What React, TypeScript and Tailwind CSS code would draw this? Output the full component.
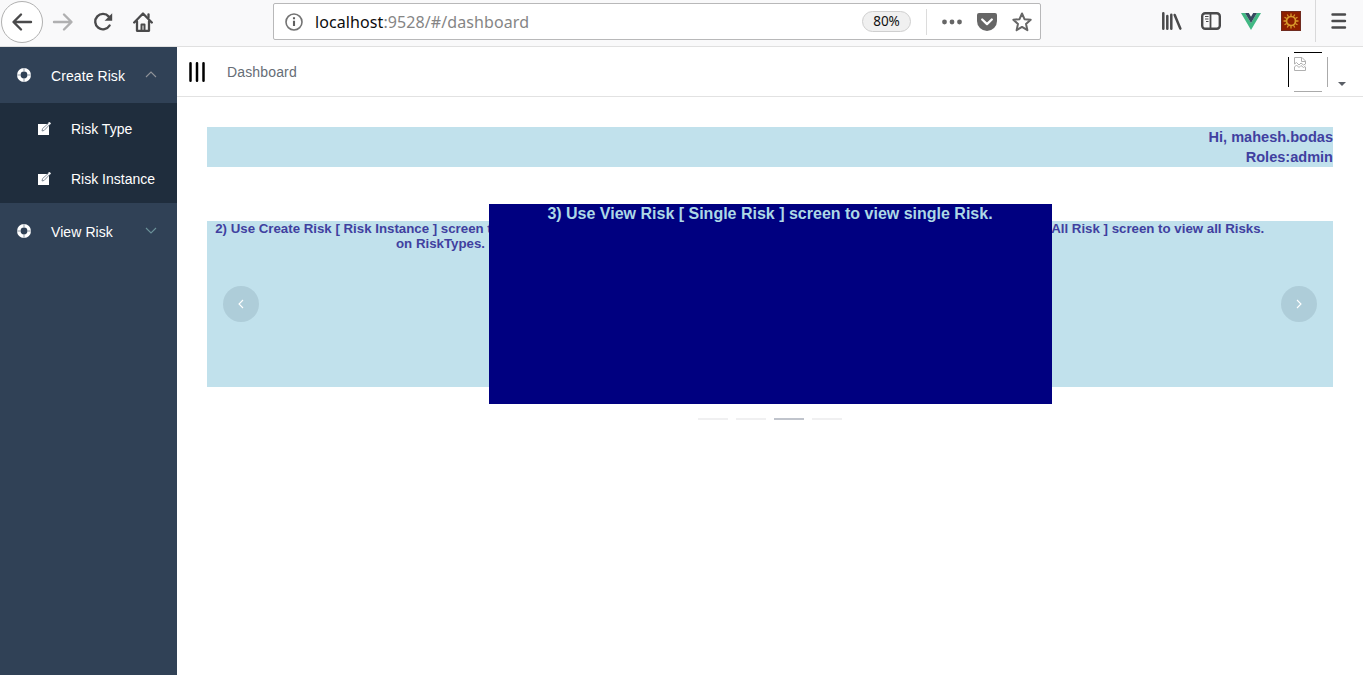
import React from "react";

function BrowserBar() {
  return (
    <header className="flex h-[47px] shrink-0 border-b border-[#e0e0e0] bg-[#f9f9fa] text-[#4a4a4b]">
      <div className="flex h-[43px] w-[273px] items-center">
        <div className="ml-px flex size-[42px] items-center justify-center rounded-full border border-[#b1b1b1] bg-white">
          <svg width="22" height="20" viewBox="0 0 22 20" fill="none" stroke="currentColor" strokeWidth="2.4" strokeLinecap="round" strokeLinejoin="round">
            <path d="M20 10H3M10 2.5 2.5 10l7.500 7.500" />
          </svg>
        </div>
        <svg className="ml-[9px] text-[#b0b0b1]" width="22" height="20" viewBox="0 0 22 20" fill="none" stroke="currentColor" strokeWidth="2.4" strokeLinecap="round" strokeLinejoin="round">
          <path d="M2 10h17M12 2.500 19.500 10 12 17.500" />
        </svg>
        <svg className="ml-[19px]" width="20" height="20" viewBox="0 0 20 20" fill="none">
          <path d="M15.800 4.600A7.700 7.700 0 1 0 16.600 13.500" stroke="currentColor" strokeWidth="2.400" strokeLinecap="round" />
          <path d="M19.200 1.200v7.600h-7.600z" fill="currentColor" />
        </svg>
        <svg className="ml-5" width="20" height="20" viewBox="0 0 20 20" fill="none" stroke="currentColor" strokeWidth="2.300" strokeLinecap="round" strokeLinejoin="round">
          <path d="M1.200 10.500 10 1.500l8.800 9M4 9.500v9.300h12V9.500" />
          <path d="M8.500 18v-5.500h3V18" strokeWidth="2" />
          <path d="M15.500 2.500v3" />
        </svg>
      </div>
      <div className="mt-[3px] flex h-[37px] w-[768px] items-center rounded-[2px] border border-[#b8b8b9] bg-white">
        <svg className="ml-[11px]" width="18" height="18" viewBox="0 0 18 18" fill="none">
          <circle cx="9" cy="9" r="8" stroke="#737373" strokeWidth="1.600" />
          <path d="M9 7.800v5.200M9 4.300v2" stroke="#5f5f5f" strokeWidth="2.100" />
        </svg>
        <span className="ml-[12px] w-[240px] whitespace-nowrap font-['Noto_Sans',sans-serif] text-[16px] leading-6 tracking-[0.09px] text-[#858585]">
          <span className="text-[#0c0c0d]">localhost</span>:9528/#/dashboard
        </span>
        <span className="ml-[307px] flex h-[21px] w-[49px] items-center justify-center rounded-full border border-[#cfcfcf] bg-[#f0f0f0] pt-px font-['Noto_Sans',sans-serif] text-[13.500px] leading-none text-[#111]">80%</span>
        <span className="ml-[15px] h-[26px] w-px bg-[#dcdcdc]" />
        <svg className="ml-[15px]" width="20" height="6" fill="#666">
          <circle cx="2.500" cy="3" r="2.400" /><circle cx="10" cy="3" r="2.400" /><circle cx="17.500" cy="3" r="2.400" />
        </svg>
        <svg className="ml-[15px]" width="20" height="18" viewBox="0 0 20 18">
          <path d="M2 0h16a2 2 0 0 1 2 2v6a10 10 0 0 1-20 0V2a2 2 0 0 1 2-2z" fill="#666" />
          <path d="m5.200 6.500 4.800 4.600 4.800-4.600" fill="none" stroke="white" strokeWidth="2.300" strokeLinecap="round" strokeLinejoin="round" />
        </svg>
        <svg className="ml-[15px]" width="20" height="20" viewBox="0 0 20 20" fill="none" stroke="#666" strokeWidth="2" strokeLinejoin="round">
          <path d="m10 1.500 2.500 5.700 6.200.6-4.700 4.100 1.400 6.300-5.400-3.300-5.400 3.300L6 11.900 1.300 7.800l6.200-.6z" />
        </svg>
      </div>
      <div className="ml-auto flex h-[42px] w-[201px] items-center">
        <svg width="20" height="18" viewBox="0 0 20 18" stroke="currentColor" strokeWidth="2.500" strokeLinecap="round">
          <path d="M1.300 1.300v15.400M5.300 4v12.700M9.300 2.800v13.900" /><path d="m12.700 3 5.600 13.600" />
        </svg>
        <svg className="ml-[19px]" width="20" height="18" viewBox="0 0 20 18" fill="none" stroke="currentColor">
          <rect x="1.200" y="1.200" width="17.600" height="15.600" rx="3" strokeWidth="2.400" />
          <path d="M9.500 1v16" strokeWidth="1.800" /><path d="M4 4.500h3.500M4 7h3.500M5 9.500h2.500" strokeWidth="1.200" />
        </svg>
        <svg className="ml-5" width="20" height="17" viewBox="0 0 20 17">
          <path d="M0 0h4l6 10 6-10h4L10 17z" fill="#41b883" />
          <path d="M4 0h3.800L10 3.700 12.200 0H16l-6 10z" fill="#35495e" />
        </svg>
        <svg className="ml-5" width="20" height="20" viewBox="0 0 20 20" fill="none">
          <path d="M0 0h20v20H0z" fill="#8e1f00" /><path d="M.5.5h19v19H.5z" stroke="#6f2b20" />
          <g stroke="#d99a2b">
            <circle cx="10" cy="10" r="4.500" strokeWidth="1.700" />
            <path d="M10 2.500V5M10 15v2.500M2.500 10H5M15 10h2.500M6.250 3.500 7.500 5.700M12.500 14.300l1.250 2.200M3.500 6.250l2.200 1.250M14.300 12.500l2.200 1.250M3.500 13.750l2.200-1.250M14.300 7.500l2.200-1.250M6.250 16.500l1.250-2.200M12.500 5.700l1.250-2.200" strokeWidth="1.300" />
          </g>
        </svg>
        <span className="ml-[14px] h-[42px] w-px bg-[#d9d9da]" />
        <svg className="ml-[14px]" width="17" height="16" viewBox="0 0 17 16" stroke="currentColor" strokeWidth="2.400" strokeLinecap="round">
          <path d="M2.500 1.500h12.500M2.500 8h12.500M2.500 14.500h12.500" />
        </svg>
      </div>
    </header>
  );
}

function RingIcon() {
  return (
    <svg width="14" height="14" viewBox="0 0 14 14" fill="none">
      <circle cx="7" cy="7" r="5.200" stroke="white" strokeWidth="3.600" />
      <path d="M7 0v4M7 10v4M0 7h4M10 7h4" stroke="#8f99a5" strokeWidth="1" />
    </svg>
  );
}

function EditIcon() {
  return (
    <svg width="13" height="13" viewBox="0 0 13 13">
      <path d="M0 2h11v11H0z" fill="white" />
      <path d="m4 9 .6-2.500L11 .8l1.200 1.200-6 6.400z" fill="white" stroke="#75808c" strokeWidth=".9" />
      <path d="m10 .9 1.500-.9L13 1.200l-1.200 1.600z" fill="white" />
    </svg>
  );
}

function MenuHead({ label, open }: { label: string; open?: boolean }) {
  return (
    <div className="flex h-14 items-center pl-[17px] text-white">
      <RingIcon />
      <span className="ml-5 w-[94px] pt-[2px] tracking-[0.08px]">{label}</span>
      <svg width="12" height="8" viewBox="0 0 12 8" fill="none" stroke={open ? "#909399" : "#6b9199"} strokeWidth="1.1">
        <path d={open ? "m1 6 5-5 5 5" : "m1 1 5 5 5-5"} />
      </svg>
    </div>
  );
}

function MenuItem({ label }: { label: string }) {
  return (
    <div className="flex h-[50px] items-center bg-[#1f2d3d] pl-[38px] text-white">
      <EditIcon />
      <span className="ml-5 pt-[2px]">{label}</span>
    </div>
  );
}

function Navbar() {
  return (
    <nav className="flex h-[50px] items-center border-b border-[#e2e2e2]">
      <svg className="ml-3" width="16" height="20" viewBox="0 0 16 20" stroke="black" strokeWidth="2.500" strokeLinecap="round">
        <path d="M1.500 1.300v17.400M8 1.300v17.400M14.500 1.300v17.400" />
      </svg>
      <span className="ml-[22px] pt-[2px] text-[14px] tracking-[0.15px] text-[#666d76]">Dashboard</span>
      <div className="ml-auto flex h-10 w-[75px]">
        <svg width="40" height="40" viewBox="0 0 40 40" fill="none">
          <path d="M.5 5v30M6 .5h28" stroke="black" />
          <path d="M39.500 5v30M6 39.500h28" stroke="#aaa" />
          <path d="M6.500 12V5.500h7.500l3.500 3.500v3M13.500 5.500V9.500h4M6.500 15v3.500h11V15M6.500 12l2-1.500 2.500 2.500 2-2 2.500 2 2-1M6.500 15l2-2 2.500 2.500 2-2 2.500 2 2-1.500" stroke="#b0b0b0" />
        </svg>
        <svg className="ml-[10px] mt-[30px]" width="8" height="4"><path d="M0 0h8L4 4z" fill="#5a5e66" /></svg>
      </div>
    </nav>
  );
}

function ArrowButton({ next }: { next?: boolean }) {
  return (
    <button className="flex size-9 items-center justify-center rounded-full bg-[#1f2d3d]/11">
      <svg width="6" height="10" viewBox="0 0 6 10" fill="none" stroke="white" strokeWidth="1.100">
        <path d={next ? "m1 1 4 4-4 4" : "M5 1 1 5l4 4"} />
      </svg>
    </button>
  );
}

function Carousel() {
  return (
    <section className="mt-[37px] font-bold text-[#4040a0]">
      <div className="grid h-[200px] grid-cols-[282px_563px_281px] items-center">
        <article className="flex h-[166px] w-[467px] flex-col bg-[#c1e1ec] text-center text-[13.280px] leading-[15px]">
          <p className="whitespace-nowrap">2) Use Create Risk [ Risk Instance ] screen to create actual Risks based<br />on RiskTypes.</p>
          <div className="ml-4 mt-[35px]"><ArrowButton /></div>
        </article>
        <article className="z-10 h-[200px] bg-[#000080] pr-px pt-px text-center text-[16px] leading-[18px] text-[#add8e6]">
          3) Use View Risk [ Single Risk ] screen to view single Risk.
        </article>
        <article className="flex h-[166px] w-[467px] flex-col justify-self-end bg-[#c1e1ec] text-center text-[13.280px] leading-[15px]">
          <p className="whitespace-nowrap">4) Use View Risk [ All Risk ] screen to view all Risks.</p>
          <div className="mr-4 mt-[50px] self-end"><ArrowButton next /></div>
        </article>
      </div>
      <div className="mt-[14px] flex justify-center gap-2">
        <span className="h-[2px] w-[30px] bg-[#f0f0f1]" />
        <span className="h-[2px] w-[30px] bg-[#f0f0f1]" />
        <span className="h-[2px] w-[30px] bg-[#c0c4cc]" />
        <span className="h-[2px] w-[30px] bg-[#f0f0f1]" />
      </div>
    </section>
  );
}

export default function App() {
  return (
    <div className="flex h-[675px] w-[1363px] flex-col overflow-hidden bg-white font-['Liberation_Sans',Arial,sans-serif]">
      <BrowserBar />
      <div className="flex min-h-0 flex-1">
        <aside className="w-[177px] shrink-0 bg-[#304156] text-[14px]">
          <MenuHead label="Create Risk" open />
          <MenuItem label="Risk Type" />
          <MenuItem label="Risk Instance" />
          <MenuHead label="View Risk" />
        </aside>
        <main className="min-w-0 flex-1">
          <Navbar />
          <div className="p-[30px]">
            <section className="h-10 bg-[#c1e1ec] text-right text-[14.560px] font-bold leading-5 text-[#4040a0]">
              <p>Hi, mahesh.bodas</p>
              <p>Roles:admin</p>
            </section>
            <Carousel />
          </div>
        </main>
      </div>
    </div>
  );
}
